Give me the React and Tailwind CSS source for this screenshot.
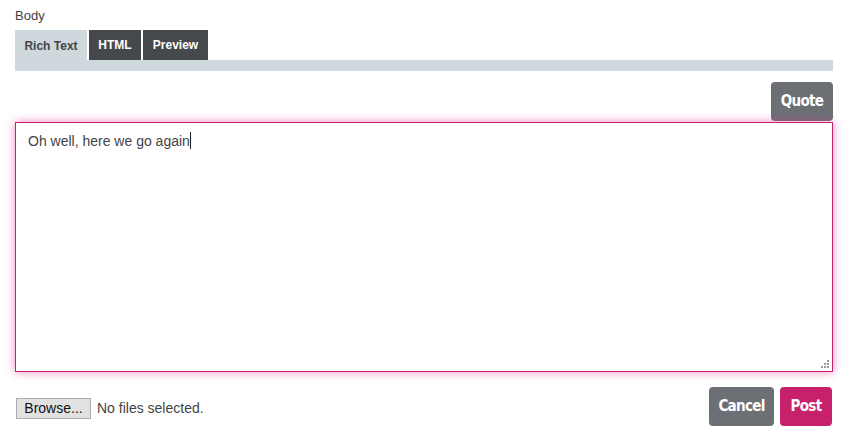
export default function App() {
  return (
    <div className="w-[842px] h-[440px] bg-white pl-[15px] pr-[9px] pt-[7px] font-['Liberation_Sans',Arial,sans-serif] text-[#333]">
      {/* Label */}
      <div className="text-[13px] leading-[17px] text-[#444]">Body</div>

      {/* Tabs */}
      <div className="mt-[6px]">
        <div className="flex items-end gap-[2px]">
          <div className="h-[31px] w-[72px] bg-[#cfd8dd] flex items-center justify-center text-[12px] font-bold text-[#444] pt-[1px]">
            Rich Text
          </div>
          <div className="h-[30px] w-[52px] mb-[1px] bg-[#45494c] flex items-center justify-center text-[12px] font-bold text-white">
            HTML
          </div>
          <div className="h-[30px] w-[65px] mb-[1px] bg-[#45494c] flex items-center justify-center text-[12px] font-bold text-white">
            Preview
          </div>
        </div>
        <div className="h-[11px] bg-[#cfd8dd] -mt-[1px]" />
      </div>

      {/* Toolbar */}
      <div className="flex justify-end mt-[11px]">
        <button className="h-[39px] w-[62px] rounded-[4px] bg-[#6c7075] text-white text-[15px] font-bold font-['DejaVu_Sans_Condensed','DejaVu_Sans',sans-serif] tracking-[-0.7px] [font-stretch:condensed]">
          Quote
        </button>
      </div>

      {/* Editor */}
      <div className="relative mt-[1px] h-[250px] border border-[#c8216c] shadow-[0_0_9px_rgba(224,40,140,0.55)] bg-white px-[12px] pt-[6px]">
        <span className="text-[14px] leading-[18px] text-[#444]">Oh well, here we go again</span>
        <span className="inline-block w-px h-[17px] bg-[#222] align-[-3px]" />
        <svg className="absolute right-[2px] bottom-[2px]" width="9" height="9" viewBox="0 0 9 9">
          <rect x="6" y="0" width="2" height="2" fill="#999" />
          <rect x="3" y="3" width="2" height="2" fill="#999" />
          <rect x="6" y="3" width="2" height="2" fill="#999" />
          <rect x="0" y="6" width="2" height="2" fill="#999" />
          <rect x="3" y="6" width="2" height="2" fill="#999" />
          <rect x="6" y="6" width="2" height="2" fill="#999" />
        </svg>
      </div>

      {/* Footer */}
      <div className="flex items-center justify-between mt-[15px]">
        <div className="flex items-center pl-[1px] pt-[3px]">
          <button className="h-[21px] w-[75px] bg-[#e1e1e1] border border-[#adadad] text-[14px] text-[#111] leading-none">
            Browse...
          </button>
          <span className="ml-[6px] text-[14px] text-[#444]">No files selected.</span>
        </div>
        <div className="flex gap-[6px] pr-[1px]">
          <button className="h-[39px] w-[65px] rounded-[4px] bg-[#6c7075] text-white text-[15px] font-bold font-['DejaVu_Sans_Condensed','DejaVu_Sans',sans-serif] tracking-[-0.7px] [font-stretch:condensed]">
            Cancel
          </button>
          <button className="h-[39px] w-[52px] rounded-[4px] bg-[#c8216c] text-white text-[15px] font-bold font-['DejaVu_Sans_Condensed','DejaVu_Sans',sans-serif] tracking-[-0.7px] [font-stretch:condensed]">
            Post
          </button>
        </div>
      </div>
    </div>
  );
}
